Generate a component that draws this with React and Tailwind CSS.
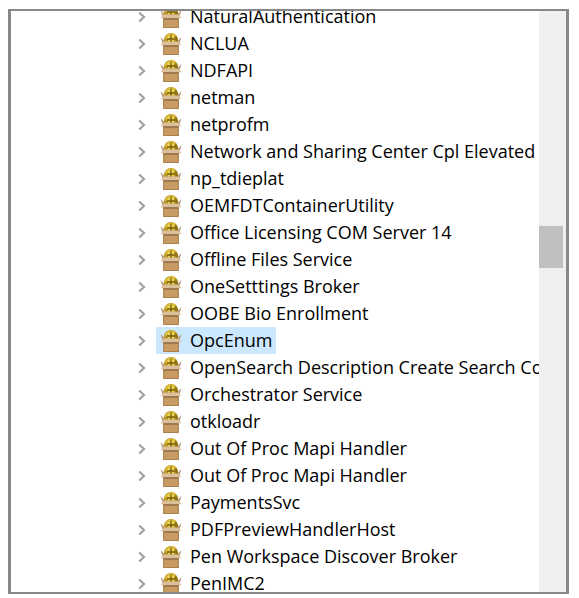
const ROWS = [
  'NaturalAuthentication',
  'NCLUA',
  'NDFAPI',
  'netman',
  'netprofm',
  'Network and Sharing Center Cpl Elevated V',
  'np_tdieplat',
  'OEMFDTContainerUtility',
  'Office Licensing COM Server 14',
  'Offline Files Service',
  'OneSetttings Broker',
  'OOBE Bio Enrollment',
  'OpcEnum',
  'OpenSearch Description Create Search Con',
  'Orchestrator Service',
  'otkloadr',
  'Out Of Proc Mapi Handler',
  'Out Of Proc Mapi Handler',
  'PaymentsSvc',
  'PDFPreviewHandlerHost',
  'Pen Workspace Discover Broker',
  'PenIMC2',
];

const SELECTED = 'OpcEnum';

function Chevron() {
  return (
    <svg className="block" width="8" height="12" viewBox="0 0 8 12" fill="none" stroke="#a2a2a2" strokeWidth="2.2">
      <path d="M1.2 1.5 L6 6 L1.2 10.5" />
    </svg>
  );
}

function PackageIcon() {
  return (
    <svg className="block shrink-0" width="22" height="24" viewBox="0 0 22 24">
      <circle cx="11" cy="8.2" r="7.2" fill="#b8961f" />
      <path d="M5 5.5 Q7 1.6 11 1.3 Q14.5 1.6 16 4 L12.5 6 L9 4.5 L6 8Z" fill="#dcbf3a" />
      <path d="M15 3.5 Q18.4 6 18 10 H15.5Z" fill="#8e7117" />
      <path d="M11 2.5 V10 M6.5 7 H15.5" stroke="#6f5914" strokeWidth="1" fill="none" />
      <path d="M8 4 h2 v2 H8z M12 4 h2 v2 h-2z M8 8 h2 v1.5 H8z M12 8 h2 v1.5 h-2z" fill="#ecd65a" />
      <path d="M0.5 5 L4.2 8.8 V11.5 L2.4 11Z" fill="#b99b79" />
      <path d="M21.5 5 L17.8 8.8 V11.5 L19.6 11Z" fill="#b99b79" />
      <path d="M3.8 9.4 H18.2 L21.6 13.2 H0.4Z" fill="#dcbf9b" />
      <path d="M3.2 13 H18.8 V23 H3.2Z" fill="#c89b62" />
      <path d="M3.2 13.2 H18.8 V14.8 H3.2Z" fill="#94704a" />
      <path d="M3.2 14 H4.2 V23 H3.2Z M17.8 14 H18.8 V23 H17.8Z M3.2 22 H18.8 V23 H3.2Z" fill="#a98051" />
    </svg>
  );
}

function TreeRow({ name }) {
  const selected = name === SELECTED;
  return (
    <li role="treeitem" aria-selected={selected} className="flex h-[27px] items-center whitespace-nowrap">
      <button type="button" aria-label={`Expand ${name}`} className="flex h-full w-5 shrink-0 items-center justify-center">
        <Chevron />
      </button>
      <button
        type="button"
        className={`ml-1 flex h-full shrink-0 items-center gap-2 px-1 ${selected ? 'bg-[#cce8ff]' : ''}`}
      >
        <PackageIcon />
        <span>{name}</span>
      </button>
    </li>
  );
}

export default function App() {
  return (
    <main className="bg-white pt-[9px] pr-[10px] pb-1 pl-2 font-['Open_Sans','Noto_Sans',sans-serif] text-[18px] leading-[27px] text-black">
      <section className="flex overflow-hidden border-x-3 border-y-2 border-[#88888a]">
        <div className="min-w-0 flex-1 overflow-hidden">
          <ul role="tree" aria-label="Applications" className="-mt-2 -mb-[5px] pl-[121px]">
            {ROWS.map((name, i) => (
              <TreeRow key={i} name={name} />
            ))}
          </ul>
        </div>
        <div className="w-[27px] shrink-0 bg-[#efefef] pt-[215px]">
          <div className="h-[42px] w-6 bg-[#bfbfbf]" />
        </div>
      </section>
    </main>
  );
}
